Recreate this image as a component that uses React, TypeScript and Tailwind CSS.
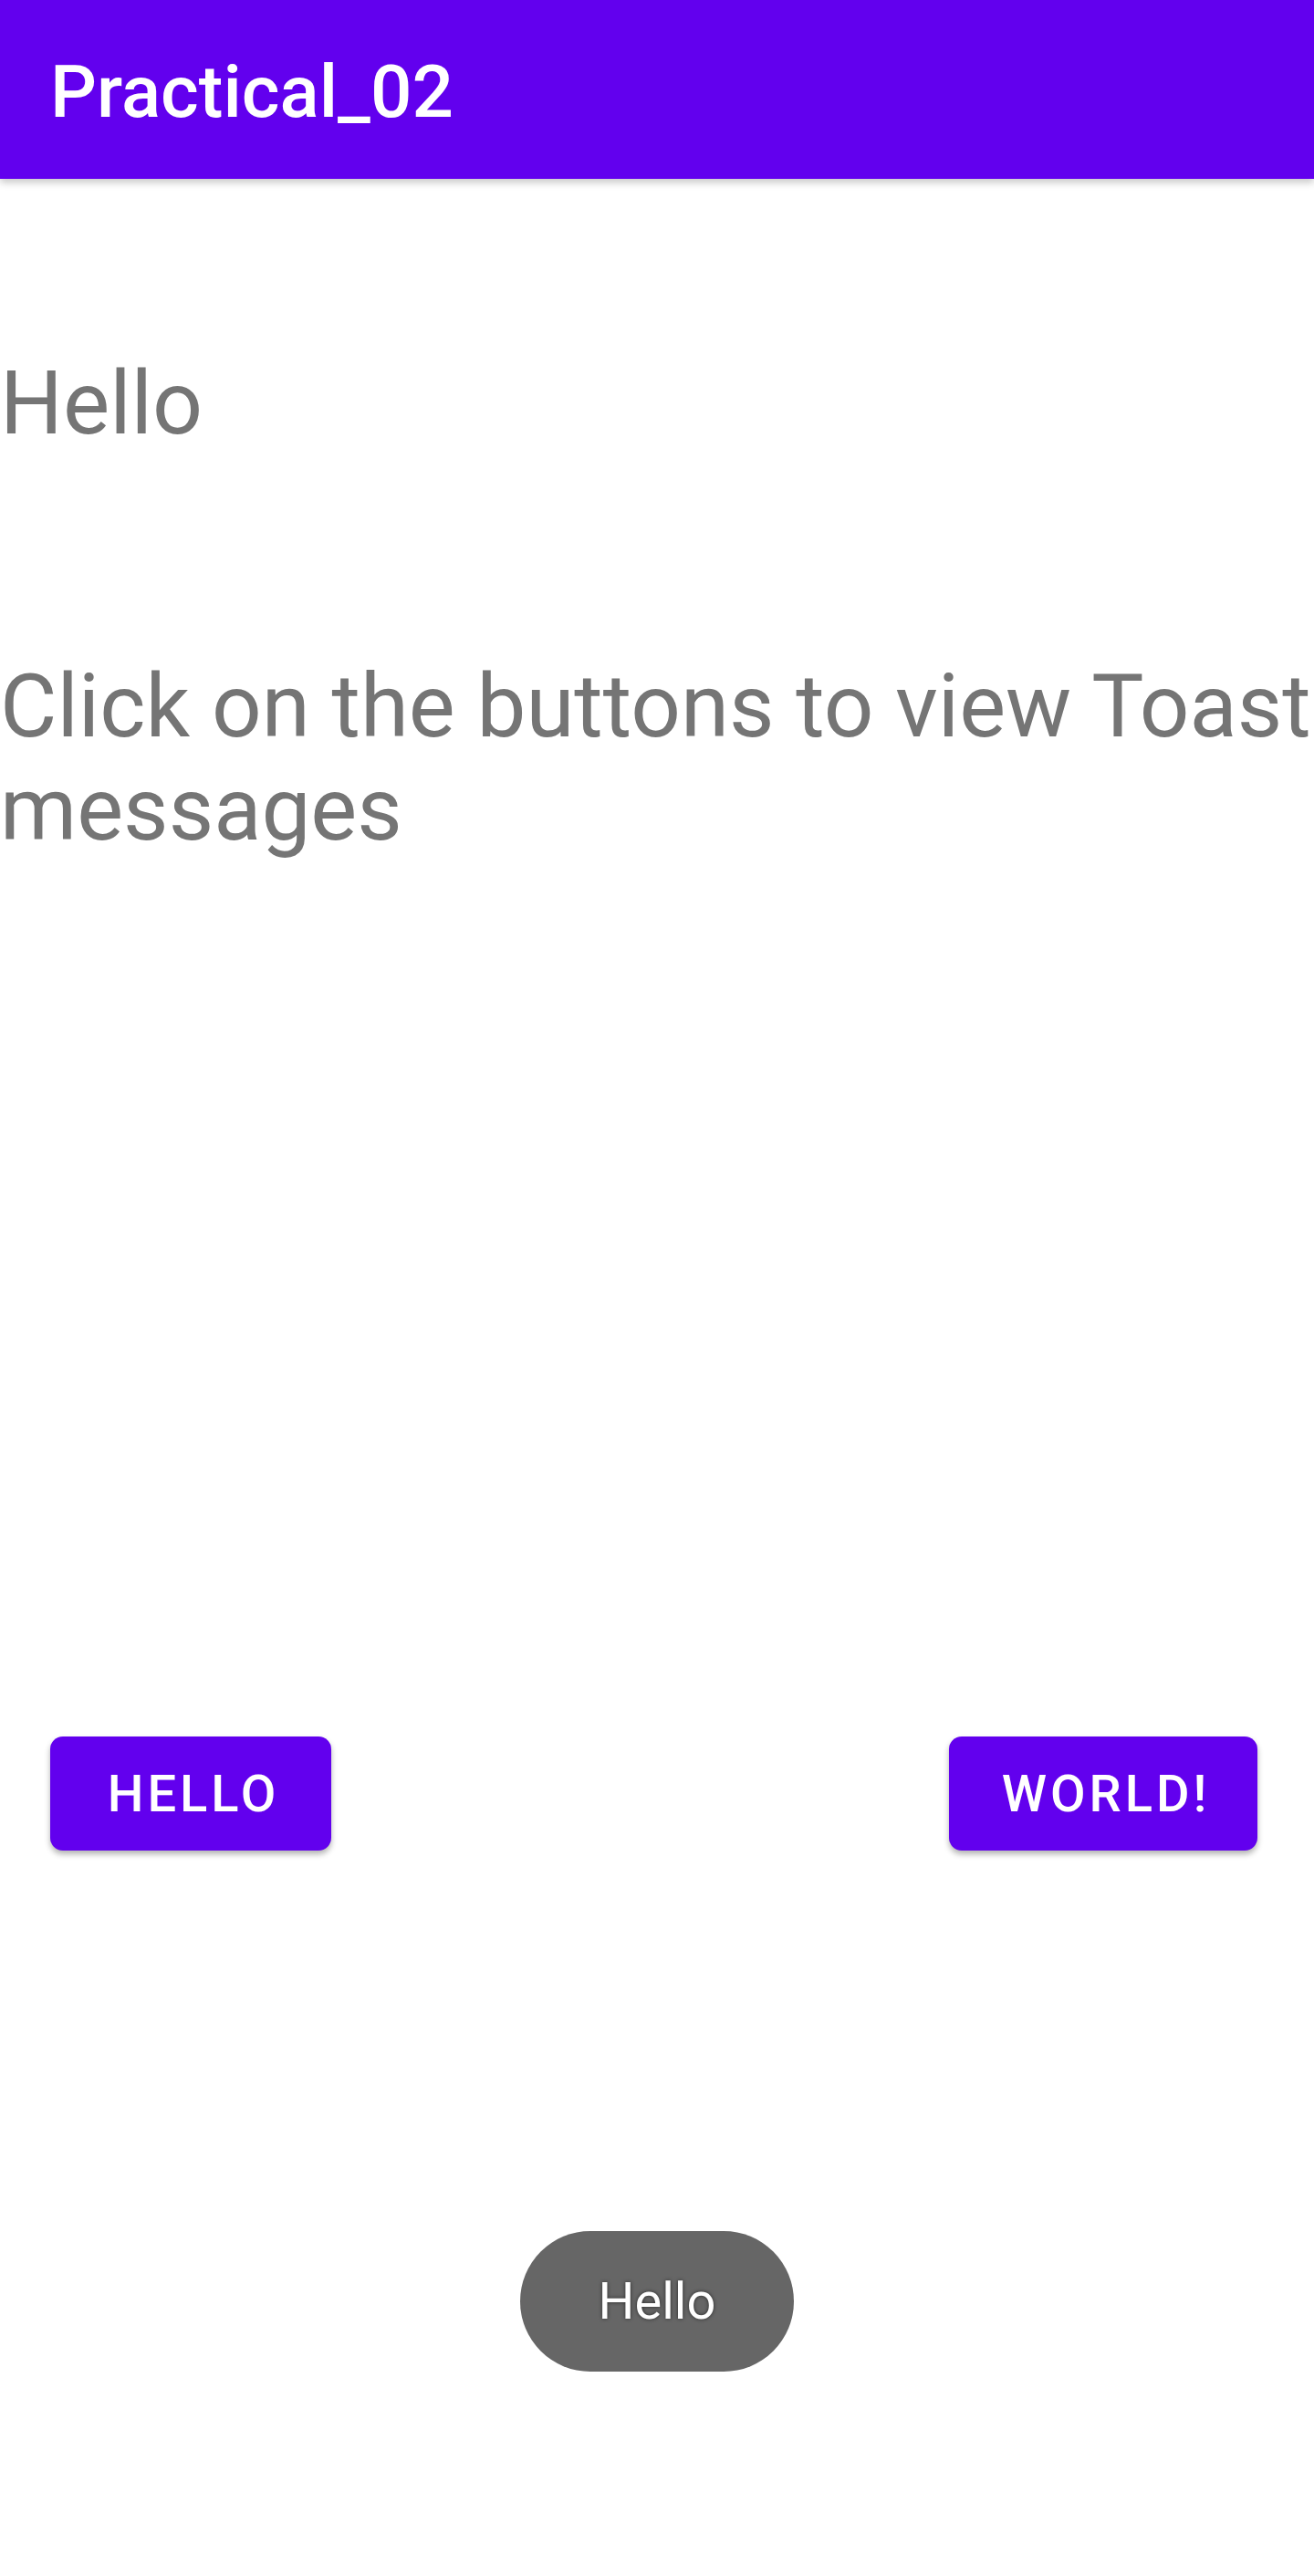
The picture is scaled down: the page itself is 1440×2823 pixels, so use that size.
const font = "font-['Roboto','Liberation_Sans',sans-serif]";

function AppBar() {
  return (
    <header className="relative z-10 flex h-[196px] items-center bg-[#6200ee] px-[55px] pt-[6px] shadow-[0_4px_8px_rgba(0,0,0,0.22)]">
      <h1 className="text-[80px] font-medium leading-[94px] text-white">Practical_02</h1>
    </header>
  );
}

function PurpleButton({ label, width }: { label: string; width: string }) {
  return (
    <button
      className={`flex h-[125px] items-center justify-center rounded-[14px] bg-[#6200ee] pl-[6px] text-[56px] font-medium uppercase leading-none tracking-[4px] text-white shadow-[0_4px_6px_rgba(0,0,0,0.3)] ${width}`}
    >
      {label}
    </button>
  );
}

export default function App() {
  return (
    <div className={`relative h-[2823px] w-full overflow-hidden bg-white ${font}`}>
      <AppBar />

      <p className="mt-[190px] text-[96.6px] leading-[113px] text-[#757575]">Hello</p>

      <p className="mt-[219px] text-[96px] leading-[113px] text-[#757575]">
        <span className="whitespace-nowrap">Click on the buttons to view Toast</span>
        <br />
        messages
      </p>

      <div className="mt-[959px] flex items-center justify-between pl-[55px] pr-[62px]">
        <PurpleButton label="Hello" width="w-[308px]" />
        <PurpleButton label="World!" width="w-[338px]" />
      </div>

      <div className="absolute bottom-[224px] left-1/2 flex h-[154px] w-[300px] -translate-x-1/2 items-center justify-center rounded-full bg-[#666666]">
        <span className="text-[56px] leading-none text-white [text-shadow:0_0_4px_rgba(0,0,0,0.6)]">Hello</span>
      </div>
    </div>
  );
}
